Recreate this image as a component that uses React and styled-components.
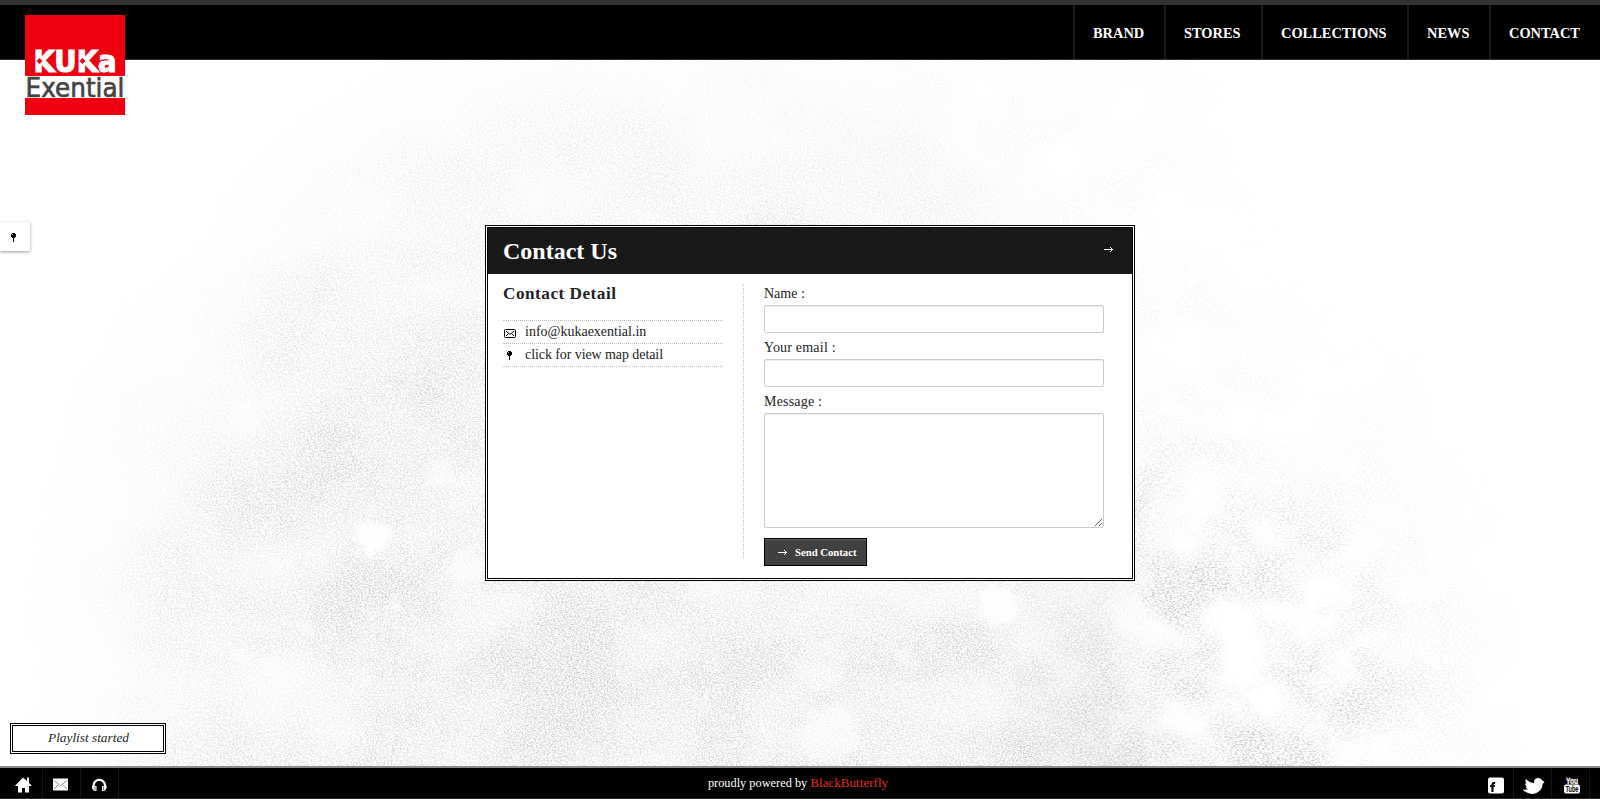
import React from 'react';
import styled, { createGlobalStyle } from 'styled-components';

const Global = createGlobalStyle`
  * { box-sizing: border-box; }
  html, body { margin: 0; padding: 0; overflow: hidden; }
  body { background: #fff; font-family: "Liberation Serif", "Times New Roman", serif; font-size: 14px; color: #222; }
`;

const Page = styled.div`
  position: relative;
  isolation: isolate;
  display: flex;
  flex-direction: column;
  width: 100%;
  height: 100vh;
  overflow: hidden;
`;

const Backdrop = styled.svg`
  position: absolute;
  z-index: -1;
  inset: 0;
`;

const Header = styled.header`
  display: flex;
  justify-content: space-between;
  flex: none;
  height: 60px;
  padding-left: 25px;
  background: #000;
  border-top: 5px solid #333;
  border-bottom: 1px solid #2b2b2b;
`;

const Logo = styled.svg`
  flex: none;
  margin-top: 10px;
`;

const Nav = styled.nav`
  display: flex;
`;

const NavLink = styled.a`
  width: ${(p) => p.$width}px;
  padding: 1px 0 0 18px;
  border-left: 2px solid #1a1a1a;
  color: #fff;
  font-size: 14.4px;
  font-weight: bold;
  line-height: 55px;
`;

const Main = styled.main`
  display: flex;
  flex-direction: column;
  flex: 1;
  align-items: flex-start;
  justify-content: space-between;
  padding-bottom: 12px;
`;

const Middle = styled.div`
  display: flex;
  align-items: flex-start;
  padding-top: 162px;
`;

const MapTab = styled.button`
  display: flex;
  align-items: center;
  width: 30px;
  height: 29px;
  padding: 2px 0 0 11px;
  border: 0;
  background: #fff;
  box-shadow: 0 1px 3px rgba(0, 0, 0, 0.4);
`;

const Card = styled.section`
  width: 650px;
  height: 356px;
  margin: 3px 0 0 455px;
  border: 3px double #000;
  background: #fff;
`;

const CardHeader = styled.div`
  display: flex;
  justify-content: space-between;
  height: 46px;
  padding: 0 18px 0 15px;
  background: #191919;
  color: #fff;
`;

const Title = styled.h1`
  margin: 0;
  font-size: 24px;
  line-height: 47px;
`;

const HeaderArrow = styled.span`
  padding-top: 18px;
  line-height: 0;
`;

const CardBody = styled.div`
  display: flex;
  padding: 10px 0 0 15px;
`;

const Details = styled.div`
  width: 241px;
  height: 275px;
  padding-right: 20px;
  border-right: 1px dotted #bbb;
`;

const DetailTitle = styled.h2`
  margin: 0 0 16px;
  font-size: 17.2px;
  line-height: 20px;
  letter-spacing: 0.5px;
`;

const DetailList = styled.ul`
  margin: 0;
  padding: 0;
  list-style: none;
  border-top: 1px dotted #bbb;
`;

const DetailItem = styled.li`
  display: flex;
  height: 23px;
  border-bottom: 1px dotted #bbb;
  line-height: 22px;
  letter-spacing: ${(p) => p.$tracking || 0}px;
`;

const DetailIcon = styled.span`
  width: 22px;
  padding: ${(p) => p.$pad};
  line-height: 0;
`;

const Form = styled.form`
  display: flex;
  flex-direction: column;
  align-items: flex-start;
  width: 340px;
  margin-left: 20px;
`;

const Label = styled.label`
  height: 21px;
  line-height: 20px;
  margin-top: ${(p) => (p.$first ? 0 : 5)}px;
  letter-spacing: ${(p) => (p.$first ? 0 : 0.2)}px;
`;

const Input = styled.input`
  width: 340px;
  height: 28px;
  border: 1px solid #ccc;
  border-radius: 2px;
  outline: none;
  background: #fff;
  box-shadow: inset 0 1px 1px rgba(0, 0, 0, 0.075);
`;

const TextArea = styled.textarea`
  width: 340px;
  height: 115px;
  border: 1px solid #ccc;
  border-radius: 2px;
  outline: none;
  background: #fff;
  box-shadow: inset 0 1px 1px rgba(0, 0, 0, 0.075);
`;

const SendButton = styled.button`
  display: flex;
  align-items: center;
  gap: 7px;
  width: 103px;
  height: 28px;
  margin-top: 10px;
  padding: 0 0 0 13px;
  border: 1px solid #000;
  background: #414141;
  box-shadow: inset 0 1px 0 #666;
  color: #fff;
  font: bold 10.7px "Liberation Serif", serif;
  white-space: nowrap;
`;

const Playlist = styled.div`
  width: 156px;
  height: 31px;
  margin-left: 10px;
  padding-left: 1px;
  border: 3px double #000;
  background: #fff;
  font-size: 13.3px;
  font-style: italic;
  line-height: 24px;
  text-align: center;
`;

const Footer = styled.footer`
  display: flex;
  justify-content: space-between;
  flex: none;
  height: 33px;
  padding: 0 10px 0 5px;
  border-top: 2px solid #8a8a8a;
  border-bottom: 1px solid #2b2b2b;
  background: #000;
`;

const IconGroup = styled.div`
  display: flex;
  margin-top: 1px;
`;

const FooterIcon = styled.a`
  width: 38px;
  padding: 8px 0 0 9px;
  border-right: 1px solid #161616;
  line-height: 0;
`;

const Credit = styled.div`
  display: flex;
  gap: 3px;
  margin-left: 1px;
  color: #fff;
  font-size: 12.35px;
  line-height: 30px;
`;

const CreditLink = styled.a`
  color: #e0301a;
  font-size: 13.1px;
`;

const Arrow = () => (
  <svg width="10" height="7" viewBox="0 0 10 7" shapeRendering="crispEdges" fill="#fff">
    <path d="M0 3h9v1H0zM6 1h1v1H6zM7 2h1v1H7zM7 4h1v1H7zM6 5h1v1H6z" />
  </svg>
);

const Pin = () => (
  <svg width="6" height="10" viewBox="0 0 6 10" shapeRendering="crispEdges">
    <path d="M1 0h3v1h1v3H4v1H3v4H2V5H1V4H0V1h1z" fill="#000" />
    <path d="M1 1h1v1H1z" fill="#bbb" />
  </svg>
);

const Envelope = () => (
  <svg width="12" height="9" viewBox="0 0 12 9" fill="none" stroke="#000">
    <rect x="0.5" y="0.5" width="11" height="8" rx="1" />
    <path d="M2 2l4 3.5L10 2M2 7l2.5-2.5M10 7L7.5 4.5" />
  </svg>
);

const spots = [
  [373, 536, 18, 0.9], [467, 566, 17, 0.6], [440, 473, 14, 0.5], [998, 605, 20, 0.85], [245, 418, 16, 0.5],
  [309, 629, 6, 0.6], [284, 620, 4, 0.6], [398, 607, 5, 0.8], [260, 595, 5, 0.5], [270, 670, 11, 0.4],
  [820, 665, 26, 0.35], [830, 735, 28, 0.45], [240, 655, 8, 0.5], [905, 655, 9, 0.4],
];

const Texture = () => (
  <Backdrop width="1600" height="799" viewBox="0 0 1600 799">
    <defs>
      <filter id="grain" x="0" y="0" width="1600" height="799" filterUnits="userSpaceOnUse" colorInterpolationFilters="sRGB">
        <feTurbulence type="fractalNoise" baseFrequency="0.55 0.75" numOctaves="3" seed="8" result="fine" />
        <feColorMatrix in="fine" values="0 0 0 0 0.4  0 0 0 0 0.4  0 0 0 0 0.4  1.9 0 0 0 -0.68" result="dots" />
        <feTurbulence type="fractalNoise" baseFrequency="0.008 0.011" numOctaves="5" seed="4" />
        <feColorMatrix values="0 0 0 0 0  0 0 0 0 0  0 0 0 0 0  0 1.3 0 0 0.05" result="patches" />
        <feComposite in="dots" in2="patches" operator="in" result="mottled" />
        <feComposite in="mottled" in2="SourceAlpha" operator="in" />
      </filter>
      <filter id="patchyGrain" x="0" y="0" width="1600" height="799" filterUnits="userSpaceOnUse" colorInterpolationFilters="sRGB">
        <feTurbulence type="fractalNoise" baseFrequency="0.4 0.7" numOctaves="3" seed="12" result="fine" />
        <feColorMatrix in="fine" values="0 0 0 0 0.4  0 0 0 0 0.4  0 0 0 0 0.4  2.2 0 0 0 -0.88" result="dots" />
        <feTurbulence type="fractalNoise" baseFrequency="0.014 0.015" numOctaves="6" seed="31" />
        <feColorMatrix values="0 0 0 0 0  0 0 0 0 0  0 0 0 0 0  0 2.6 0 0 -0.75" result="patches" />
        <feComposite in="dots" in2="patches" operator="in" result="mottled" />
        <feComposite in="mottled" in2="SourceAlpha" operator="in" />
      </filter>
      <filter id="soft" x="-50%" y="-50%" width="200%" height="200%"><feGaussianBlur stdDeviation="50" /></filter>
      <filter id="rough" x="0" y="0" width="1600" height="799" filterUnits="userSpaceOnUse">
        <feTurbulence type="fractalNoise" baseFrequency="0.12" numOctaves="4" />
        <feDisplacementMap in="SourceGraphic" scale="26" xChannelSelector="R" yChannelSelector="G" />
        <feGaussianBlur stdDeviation="2" />
      </filter>
    </defs>
    <rect width="1600" height="799" fill="#fff" />
    <g filter="url(#grain)">
      <g filter="url(#soft)">
        <path d="M110 860L110 560L160 400L290 230L460 110L760 90L960 180L1110 520L1180 860Z" fill="#000" fillOpacity="0.25" />
        <path d="M280 860L240 480L380 360L520 330L900 440L1060 600L1120 860Z" fill="#000" fillOpacity="0.24" />
      </g>
    </g>
    <g filter="url(#patchyGrain)">
      <g filter="url(#soft)">
        <path d="M1080 860L1080 460L1200 490L1390 600L1390 860Z" fill="#000" fillOpacity="0.38" />
        <path d="M760 50L1150 70L1230 330L1400 420L1500 700L1480 860L1100 800L1050 300Z" fill="#000" fillOpacity="0.11" />
      </g>
    </g>
    <g filter="url(#rough)" fill="#fff">
      {spots.map(([x, y, r, o]) => <circle key={`${x}-${y}`} cx={x} cy={y} r={r} fillOpacity={o} />)}
    </g>
  </Backdrop>
);

const nav = [['BRAND', 91], ['STORES', 97], ['COLLECTIONS', 146], ['NEWS', 82], ['CONTACT', 111]];

export default function App() {
  return (
    <Page>
      <Global />
      <Texture />
      <Header>
        <Logo width="100" height="100" viewBox="0 0 100 100">
          <rect width="100" height="100" fill="#ee0011" />
          <rect y="61" width="100" height="22" fill="#fff" />
          <text x="8.500" y="56.800" fontFamily="DejaVu Sans" fontWeight="bold" fontSize="29.500" fill="#fff" stroke="#fff" strokeWidth="1.200" textLength="83" lengthAdjust="spacingAndGlyphs">KUKa</text>
          <path d="M14.500 43l3 3-3 3-3-3zM57.500 43l3 3-3 3-3-3z" fill="#ee0011" />
          <text x="0.500" y="82.300" fontFamily="DejaVu Sans" fontSize="27" fill="#444" stroke="#444" strokeWidth="0.700" textLength="99" lengthAdjust="spacingAndGlyphs">Exential</text>
        </Logo>
        <Nav>
          {nav.map(([text, width]) => <NavLink key={text} $width={width}>{text}</NavLink>)}
        </Nav>
      </Header>
      <Main>
        <Middle>
          <MapTab type="button" aria-label="Map"><Pin /></MapTab>
          <Card>
            <CardHeader>
              <Title>Contact Us</Title>
              <HeaderArrow><Arrow /></HeaderArrow>
            </CardHeader>
            <CardBody>
              <Details>
                <DetailTitle>Contact Detail</DetailTitle>
                <DetailList>
                  <DetailItem><DetailIcon $pad="8px 0 0 1px"><Envelope /></DetailIcon>info@kukaexential.in</DetailItem>
                  <DetailItem $tracking={-0.08}><DetailIcon $pad="7px 0 0 4px"><Pin /></DetailIcon>click for view map detail</DetailItem>
                </DetailList>
              </Details>
              <Form>
                <Label $first htmlFor="name">Name :</Label>
                <Input id="name" />
                <Label htmlFor="email">Your email :</Label>
                <Input id="email" />
                <Label htmlFor="message">Message :</Label>
                <TextArea id="message" />
                <SendButton type="button"><Arrow />Send Contact</SendButton>
              </Form>
            </CardBody>
          </Card>
        </Middle>
        <Playlist>Playlist started</Playlist>
      </Main>
      <Footer>
        <IconGroup>
          <FooterIcon aria-label="Home">
            <svg width="18" height="17" viewBox="0 0 18 17" fill="#fff">
              <path d="M9 0.500L13 4V0.500h2v5.300L17.800 9H15v6.500h-4V11H8v4.500H4V9H0.800z" />
            </svg>
          </FooterIcon>
          <FooterIcon aria-label="Mail">
            <svg width="18" height="17" viewBox="0 0 18 17">
              <path d="M1 1.500h15v12H1z" fill="#fff" />
              <path d="M1.500 3.500l7 5 7-5M2 12l4-4M15 12l-4-4" fill="none" stroke="#888" strokeWidth="0.9" />
            </svg>
          </FooterIcon>
          <FooterIcon aria-label="Music">
            <svg width="18" height="17" viewBox="0 0 18 17">
              <path d="M3.500 12V9a5.800 6.200 0 0 1 11.600 0V12" fill="none" stroke="#fff" strokeWidth="2.200" />
              <path d="M2 9h4.500v5H4.500Q2 13 2 9zM12 9h4.600Q16.600 13 14 14H12z" fill="#fff" />
              <path d="M4.900 9.500v4M13.600 9.500v4" stroke="#000" strokeWidth="0.600" />
            </svg>
          </FooterIcon>
        </IconGroup>
        <Credit>proudly powered by <CreditLink>BlackButterfly</CreditLink></Credit>
        <IconGroup>
          <FooterIcon aria-label="Facebook">
            <svg width="22" height="18" viewBox="0 0 22 18">
              <rect x="3" y="0.500" width="16" height="16" rx="2" fill="#fff" />
              <path d="M6.400 15v-5H5V8.300h1.400V7.400Q6.400 5 8.800 5h1.300v2H9.200q-.7 0-.7.8v.5H10L9.700 10H8.500v5z" fill="#000" />
            </svg>
          </FooterIcon>
          <FooterIcon aria-label="Twitter">
            <svg width="24" height="18" viewBox="1 0 24 18" fill="#fff">
              <path d="M0.500 12.500Q4 13 6 12Q4 11.500 3.600 9.800L5 9.700Q3 8.500 3 6.500L4.500 6.800Q2.800 4.500 4 2Q7.500 6 12 6Q12 1.500 15.500 1Q18 .6 19.500 2.500L21 4L22.500 5L20.600 7Q20.500 13 14.500 16Q7 19 0.500 12.500z" />
            </svg>
          </FooterIcon>
          <FooterIcon aria-label="YouTube">
            <svg width="20" height="19" viewBox="0 0 20 19">
              <text x="5" y="6.800" fontFamily="Liberation Sans" fontWeight="bold" fontSize="8.500" fill="#fff" stroke="#fff" strokeWidth="0.300" textLength="12" lengthAdjust="spacingAndGlyphs">You</text>
              <rect x="3" y="7.500" width="16" height="9" rx="2" fill="#fff" />
              <text x="4.500" y="15" fontFamily="Liberation Sans" fontWeight="bold" fontSize="8.500" fill="#000" textLength="13" lengthAdjust="spacingAndGlyphs">Tube</text>
            </svg>
          </FooterIcon>
        </IconGroup>
      </Footer>
    </Page>
  );
}
